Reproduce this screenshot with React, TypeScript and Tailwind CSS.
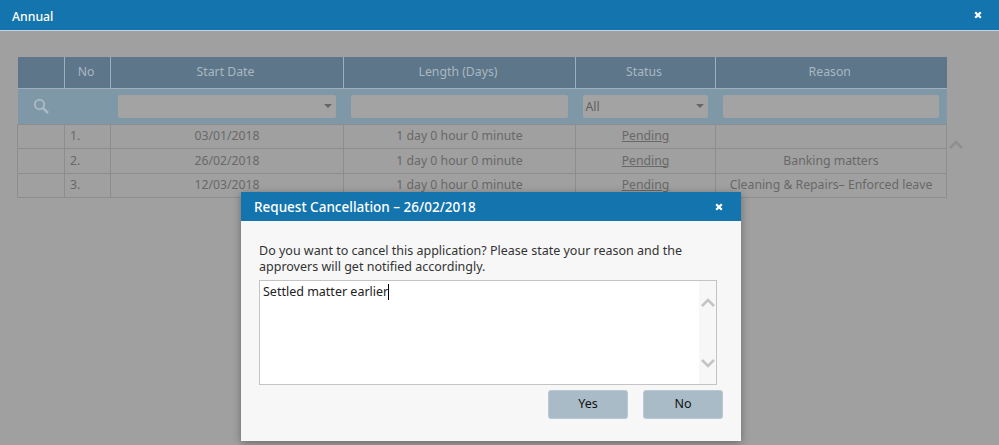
const rows = [
  { no: "1.", date: "03/01/2018", reason: "" },
  { no: "2.", date: "26/02/2018", reason: "Banking matters" },
  { no: "3.", date: "12/03/2018", reason: "Cleaning & Repairs– Enforced leave" },
];

const CloseIcon = () => (
  <svg width="8" height="8" viewBox="0 0 8 8" className="block">
    <path d="M1.2 1.2 L6.8 6.8 M6.8 1.2 L1.2 6.8" stroke="#fff" strokeWidth="2.2" />
  </svg>
);

const Chevron = ({ up, color }: { up?: boolean; color: string }) => (
  <svg width="14" height="9" viewBox="0 0 14 9" className="block">
    <path d={up ? "M1 8 L7 2 L13 8" : "M1 1 L7 7 L13 1"} fill="none" stroke={color} strokeWidth="2.6" />
  </svg>
);

const Caret = () => (
  <span className="w-0 h-0 border-x-[4px] border-x-transparent border-t-[4px] border-t-[#666]" />
);

const FilterInput = ({ text, caret }: { text?: string; caret?: boolean }) => (
  <div className="h-[23px] rounded-[2px] bg-[#a3a3a3] flex items-center justify-between pl-[3px] pr-[4px] text-[#606060]">
    <span className="pt-[2px]">{text}</span>
    {caret && <Caret />}
  </div>
);

export default function App() {
  return (
    <div className="relative w-[999px] h-[445px] overflow-hidden bg-[#a0a0a0] text-[12.25px] font-['Noto_Sans',sans-serif]">
      <div className="h-[31px] bg-[#1474ad] border-b border-[#c5d5df] flex items-center justify-between pl-[12px] pr-[17px] text-white font-medium">
        <span className="pt-[4px]">Annual</span>
        <CloseIcon />
      </div>

      <div className="flex items-start pl-[17px] pt-[26px]">
        <table className="w-[929px] table-fixed border-collapse text-center">
          <colgroup>
            <col className="w-[47px]" />
            <col className="w-[46px]" />
            <col className="w-[233px]" />
            <col className="w-[232px]" />
            <col className="w-[140px]" />
            <col className="w-[231px]" />
          </colgroup>
          <thead>
            <tr className="h-[31px] bg-[#5d7689] text-[#a9b8c3]">
              <th className="font-normal border-r border-[#9eb0bd]" />
              <th className="font-normal border-r border-[#9eb0bd] pr-[3px]">No</th>
              <th className="font-normal border-r border-[#9eb0bd] pr-[3px]">Start Date</th>
              <th className="font-normal border-r border-[#9eb0bd] pr-[3px]">Length (Days)</th>
              <th className="font-normal border-r border-[#9eb0bd] pr-[3px]">Status</th>
              <th className="font-normal pr-[3px]">Reason</th>
            </tr>
            <tr className="h-[36px] bg-[#7e98a8] border-t border-[#9eb0bd]">
              <th className="font-normal">
                <svg width="17" height="17" viewBox="0 0 17 17" className="block mx-auto">
                  <circle cx="6.5" cy="6.5" r="4.7" fill="none" stroke="#a9b9c3" strokeWidth="2" />
                  <path d="M10 10 L15 15" stroke="#a9b9c3" strokeWidth="2.6" />
                </svg>
              </th>
              <th />
              <th className="font-normal pl-[7px] pr-[8px]"><FilterInput caret /></th>
              <th className="font-normal pl-[7px] pr-[8px]"><FilterInput /></th>
              <th className="font-normal pl-[7px] pr-[8px] text-left"><FilterInput text="All" caret /></th>
              <th className="font-normal pl-[7px] pr-[8px]"><FilterInput /></th>
            </tr>
          </thead>
          <tbody className="text-[#686868]">
            {rows.map((r) => (
              <tr key={r.no} className="h-[24.5px]">
                <td className="border border-[#8d8d8d]" />
                <td className="border border-[#8d8d8d] text-left pl-[5px]">{r.no}</td>
                <td className="border border-[#8d8d8d]">{r.date}</td>
                <td className="border border-[#8d8d8d]">1 day 0 hour 0 minute</td>
                <td className="border border-[#8d8d8d]"><span className="underline">Pending</span></td>
                <td className="border border-[#8d8d8d]">{r.reason}</td>
              </tr>
            ))}
          </tbody>
        </table>
        <div className="ml-[2px] mt-[83px]">
          <Chevron up color="#8f8f8f" />
        </div>
      </div>

      <div className="absolute left-[241px] top-[192px] w-[500px] h-[249px] bg-[#f7f7f7] shadow-[0_2px_8px_rgba(0,0,0,0.35)] flex flex-col">
        <div className="h-[29px] bg-[#1474ad] flex items-center justify-between pl-[13px] pr-[18px] text-white text-[13.5px] font-medium">
          <span className="pt-[2px]">Request Cancellation – 26/02/2018</span>
          <CloseIcon />
        </div>
        <div className="px-[18px] pt-[22px] flex flex-col text-[12.5px]">
          <p className="leading-[16px] text-[#333]">
            Do you want to cancel this application? Please state your reason and the
            <br />
            approvers will get notified accordingly.
          </p>
          <div className="mt-[5px] h-[105px] w-[458px] border border-[#c4c4c4] bg-white flex justify-between">
            <div className="pl-[3px] pt-[2px] text-[#222] flex items-start">
              <span>Settled matter earlier</span>
              <span className="w-px h-[16px] mt-[1px] bg-black" />
            </div>
            <div className="w-[17px] bg-[#f7f7f7] flex flex-col items-center justify-between pt-[17px] pb-[16px]">
              <Chevron up color="#c4c4c4" />
              <Chevron color="#c4c4c4" />
            </div>
          </div>
          <div className="mt-[5px] flex justify-end gap-[15px]">
            <button className="w-[80px] h-[29px] rounded-[3px] border border-[#b9c8d1] bg-[#a9bbc6] text-[#111]">Yes</button>
            <button className="w-[80px] h-[29px] rounded-[3px] border border-[#b9c8d1] bg-[#a9bbc6] text-[#111]">No</button>
          </div>
        </div>
      </div>
    </div>
  );
}
